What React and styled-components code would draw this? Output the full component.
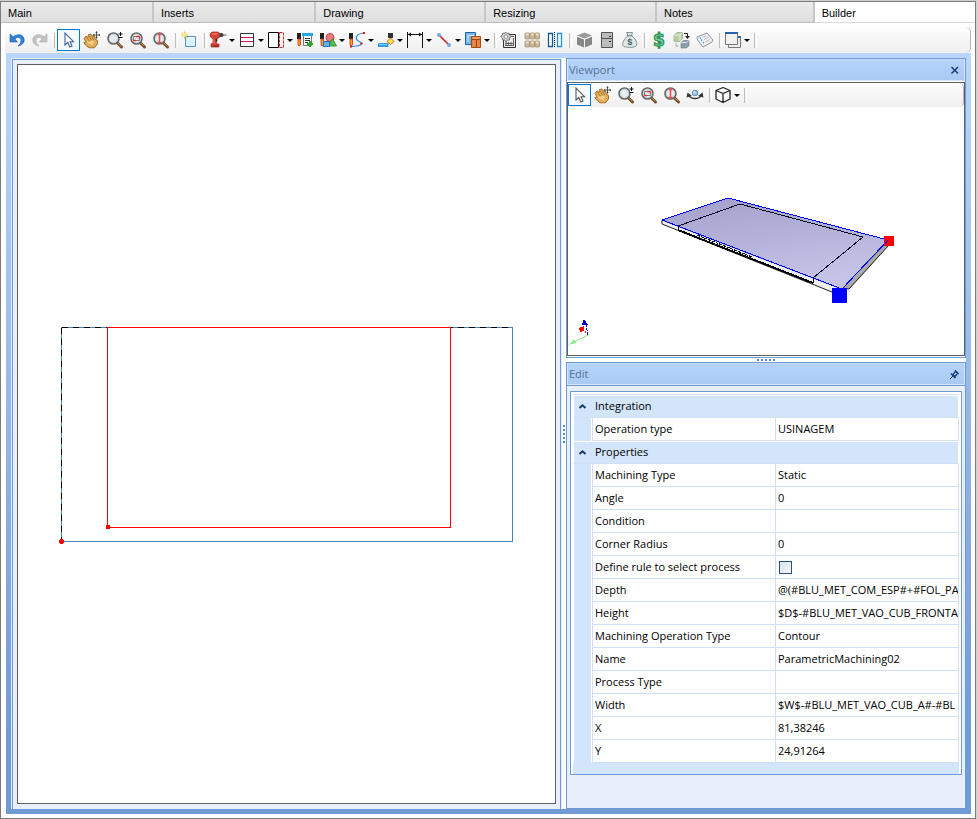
import React, { useState } from 'react'
import styled, { createGlobalStyle, css } from 'styled-components'

const GlobalStyle = createGlobalStyle`
*{
  box-sizing: border-box;
}
body{
  margin: 0;
  background: #fff;
  color: #000;
  font-family: 'Open Sans', 'Noto Sans', sans-serif;
  font-size: 11px;
}
button, input{
  font: inherit;
  color: inherit;
}
`

const Window = styled.div`
height: 100vh;
padding-top: 1px;
padding-right: 1px;
background: #d0d0d0;
display: flex;
`

const Frame = styled.main`
flex: 1;
min-width: 0;
display: flex;
flex-direction: column;
background: #fff;
border: 1px solid #7c7c7c;
`

const Tabs = styled.div`
display: flex;
height: 21px;
background: #e1e1e1;
`

const Tab = styled.button`
flex: ${props => props.$grow} 1 0;
height: 21px;
padding: 2px 0 0 7px;
border: 0;
border-right: 2px solid #c6c6c6;
border-bottom: 1px solid #bdbdbd;
background: linear-gradient(#ebebeb, #dedede);
font-family: 'Liberation Sans', Arial, sans-serif;
font-size: 11px;
text-align: left;

&:last-child{
  border-right: 0;
}

${props => props.$active && css`
  background: #fff;
  border-bottom-color: #d9d9d9;
`}
`

const Content = styled.div`
flex: 1;
min-height: 0;
display: flex;
flex-direction: column;
padding: 4px 4px 4px;
`

const Toolbar = styled.div`
display: flex;
align-items: center;
flex: none;
height: ${props => props.$small ? '24px' : '26px'};
border-right: 1px solid #b4b4b4;
border-radius: 0 5px 5px 0;
background: linear-gradient(#fdfdfd, #efefef);
overflow: hidden;
`

const ToolButton = styled.button`
display: flex;
align-items: center;
flex: none;
width: ${props => props.$menu ? '29px' : '23px'};
height: 22px;
padding: 0 1px;
border: 1px solid transparent;
background: none;

svg{
  flex: none;
}

${props => props.$active && css`
  border-color: #0078d7;
  background: #f6faff;
`}
`

const Caret = styled.span`
border: 3px solid transparent;
border-top-color: #000;
border-bottom: 0;
`

const Separator = styled.span`
flex: none;
width: 6px;
height: 15px;
border-right: 1px solid #fff;
background: linear-gradient(#bdbdbd, #bdbdbd) 3px 0 / 1px 100% no-repeat;
`

const Dock = styled.div`
flex: 1;
min-height: 0;
display: grid;
grid-template-columns: minmax(0, 551fr) 4px minmax(0, 400fr);
margin-left: 1px;
padding: 5px;
background: linear-gradient(#bad6fd, #6f9ad3 92%);
`

const CanvasPane = styled.section`
display: flex;
border: 1px solid #e3eefc;
border-bottom: 0;
background: #6f9ad3;
padding: 1px 1px 0;
`

const CanvasMat = styled.div`
flex: 1;
display: flex;
padding: 4px 4px 5px;
background: #e8effa;
`

const Canvas = styled.div`
flex: 1;
min-width: 0;
border: 1px solid #5f5f5f;
background: #fff;

svg{
  display: block;
  width: 100%;
  height: 100%;
}
`

const Splitter = styled.div`
display: flex;
align-items: center;
justify-content: center;
background: #fff;
`

const Grip = styled.span`
width: ${props => props.$vertical ? '2px' : '18px'};
height: ${props => props.$vertical ? '18px' : '2px'};
background: repeating-linear-gradient(${props => props.$vertical ? '180deg' : '90deg'}, #5b8ad0 0 2px, #fff 2px 4px);
`

const SidePane = styled.div`
min-height: 0;
display: grid;
grid-template-rows: minmax(0, 300fr) 4px minmax(0, 447fr);
`

const Panel = styled.section`
min-height: 0;
display: flex;
flex-direction: column;
border: 1px solid #6f9ad3;
background: ${props => props.$tinted ? '#e8effa' : '#fff'};
`

const PanelHeader = styled.header`
display: flex;
align-items: center;
justify-content: space-between;
flex: none;
height: 22px;
padding: 0 4px 0 1px;
border: 1px solid #d5e6fd;
border-top-color: #c3dbfc;
background: linear-gradient(#b6d3fa, #a9caf2);
`

const PanelTitle = styled.h2`
margin: 0;
font-size: 11px;
font-weight: 400;
line-height: 16px;
color: #557096;
`

const PanelButton = styled.button`
display: flex;
padding: 0;
border: 0;
background: none;
`

const Viewport = styled.div`
flex: 1;
min-height: 0;
display: flex;
flex-direction: column;
border: 1px solid #5f5f5f;
margin: 1px 0;
background: #fff;
`

const Scene = styled.svg`
flex: 1;
min-height: 0;
width: 100%;
display: block;
`

const GridArea = styled.div`
padding: 5px 3px 0;
border-top: 1px solid #6f9ad3;
overflow: auto;
`

const GridFrame = styled.div`
padding: 2px 2px 0;
border: 1px solid #6f9ad3;
background: #fff;
`

const GridFooter = styled.div`
height: 11px;
background: #d3e5fb;
`

const PropertyTable = styled.table`
width: 100%;
table-layout: fixed;
border-spacing: 0;
border-top: 1px solid #cfe0f7;
`

const Gutter = styled.td`
padding: 0;
border-left: 1px solid #fff;
border-right: 1px solid #fff;
background: #d3e5fb;
`

const GroupCell = styled.th`
height: 23px;
padding: 0;
border: 1px solid #fff;
border-bottom: 1px solid #cfe0f7;
background: #d3e5fb;
font-weight: 400;
text-align: left;
vertical-align: top;
`

const GroupButton = styled.button`
display: flex;
align-items: center;
gap: 8px;
height: 20px;
padding: 0 0 0 4px;
border: 0;
background: none;
line-height: 16px;
`

const NameCell = styled.th`
height: 23px;
padding: 0 0 0 2px;
border-left: 1px solid #cfe0f7;
border-bottom: 1px solid #cfe0f7;
font-weight: 400;
line-height: 16px;
text-align: left;
white-space: nowrap;
overflow: hidden;
`

const ValueCell = styled.td`
padding: 0 0 0 2px;
border: 1px solid #cfe0f7;
border-top: 0;
line-height: 16px;
`

const ValueText = styled.div`
white-space: nowrap;
overflow: hidden;
`

const CheckBox = styled.input`
appearance: none;
display: block;
width: 13px;
height: 13px;
margin: 0 0 0 1px;
border: 1px solid #1f5087;
background: linear-gradient(135deg, #dbe0ea, #f6f7fa);

&:checked{
  background: #3b76c4;
}
`

const Icon = ({ children }) => (
  <svg width="20" height="20" viewBox="0 0 20 20" fill="none" aria-hidden="true">{children}</svg>
)

const UndoIcon = () => (
  <Icon><path d="M3 4V12H10.500L8 9C10 6.500 14 7 14 10.500C14 13 12.500 14.500 11 16C15 15.200 17.200 13 17.200 10C17.200 4.500 10.500 3 6 6.800Z" fill="#2f83d6" stroke="#1b5ea8" strokeWidth=".6" /></Icon>
)

const RedoIcon = () => (
  <Icon><path d="M17 4V12H9.500L12 9C10 6.500 6 7 6 10.500C6 13 7.500 14.500 9 16C5 15.200 2.800 13 2.800 10C2.800 4.500 9.500 3 14 6.800Z" fill="#c3c3c3" stroke="#ababab" strokeWidth=".6" /></Icon>
)

const PointerIcon = ({ color = '#3b5f93' }) => (
  <Icon><path d="M6 3V15L8.800 12.500L10.800 17L13 16L11 11.700H14.500Z" fill="#fff" stroke={color} strokeWidth="1.100" /></Icon>
)

const HandIcon = () => (
  <Icon>
    <path d="M2 8.500L4 6L6 7.500L6.500 4.500L9 4L10 6L12.500 6L13 9L15.500 10.500V14L12.500 17.800H7L3.500 15L1.800 12.500L4.200 12.200Z" fill="#e2ac58" stroke="#9a6720" strokeWidth=".9" />
    <path d="M4.500 7.500L7.500 11M7.300 6L9.500 10M10 6.800L11.500 10" stroke="#9a6720" strokeWidth=".8" />
    <path d="M5 12L8 13L11 15M8.500 11.500L12 12.500" stroke="#f8d898" strokeWidth="1.500" />
    <path d="M14.500 1.800V8.200M11.300 5H17.700" stroke="#444" strokeWidth=".9" />
    <path d="M13.300 2.700L14.500 1.200L15.700 2.700ZM13.300 7.300L14.500 8.800L15.700 7.300ZM12.200 3.800L10.800 5L12.200 6.200ZM16.800 3.800L18.200 5L16.800 6.200Z" fill="#333" />
  </Icon>
)

const Lens = ({ children }) => (
  <Icon>
    <path d="M12 12.500L16.500 17" stroke="#76502c" strokeWidth="3" strokeLinecap="round" />
    <path d="M12.500 12.500L16 16" stroke="#c08d4d" strokeLinecap="round" />
    <circle cx="8.500" cy="8.500" r="5.500" fill="#e6edf1" stroke="#666" strokeWidth="1.600" />
    <circle cx="8.500" cy="8.500" r="4.200" stroke="#bccad1" strokeWidth=".8" />
    {children}
  </Icon>
)

const ZoomIcon = () => (
  <Lens><path d="M13 1H19V8.500H14.500Z" fill="#fafafa" /><path d="M15.500 2V6M13.500 4H17.500M13.500 7.500H17.500" stroke="#111" /></Lens>
)

const ZoomWindowIcon = () => (
  <Lens><path d="M5.500 6.500H11.500V10.500H5.500Z" stroke="#777" /><path d="M8 6.500H11.500M5 10.500H8M11.500 7V9" stroke="#e33" strokeWidth="1.300" /></Lens>
)

const ZoomFitIcon = () => (
  <Lens><path d="M6.500 4.500H10.500M6.500 12.500H10.500M8.500 5V12" stroke="#f14848" strokeWidth="1.500" /></Lens>
)

const NewSheetIcon = () => (
  <Icon>
    <path d="M5.500 6.500H15.500V16.500H5.500Z" fill="#d9effc" stroke="#4f93c6" />
    <path d="M8 8H14V15" stroke="#fff" />
    <path d="M4.500 1.500V8.500M1 5H8M2 2.500L7 7.500M7 2.500L2 7.500" stroke="#ecc83a" />
    <circle cx="4.500" cy="5" r="1.600" fill="#fff59a" />
  </Icon>
)

const DrillIcon = () => (
  <Icon>
    <path d="M1 4L3 2H9L10.500 3V7L9 8.500H7L7.500 14H10V17H2V14L4 13V9L1.500 7Z" fill="#d94336" stroke="#962820" strokeWidth=".7" />
    <path d="M3 4H8M5 9.500V13" stroke="#ff8b78" />
    <path d="M10.500 3H13L14.500 4.300V6L13 7H10.500Z" fill="#444" />
    <path d="M14 5H17.500" stroke="#555" />
    <path d="M7.500 9V11.500" stroke="#222" strokeWidth="1.500" />
    <path d="M4 16H9" stroke="#7f1d18" />
  </Icon>
)

const PanelIcon = () => (
  <Icon><path d="M2.500 3.500H15.500V16.500H2.500Z" fill="#fff" stroke="#333" /><path d="M3 7.500H15M3 11.500H15" stroke="#d4145a" /></Icon>
)

const EdgeIcon = () => (
  <Icon><path d="M1.500 2.500H11.500V17.500H1.500Z" fill="#fff" stroke="#000" /><path d="M12.500 2.500H16.500V17.500H12.500Z" stroke="#d82626" strokeDasharray="3 1" /></Icon>
)

const Bit = () => (
  <>
    <path d="M1 3H5V9H1Z" fill="#222" />
    <path d="M2 9H4.500V15L3 16L2 15Z" fill="#f7a21b" stroke="#d72a16" strokeWidth=".8" />
  </>
)

const ListAddIcon = () => (
  <Icon>
    <Bit />
    <path d="M7.500 6V15.500H15.500V6" fill="#fff" stroke="#777" />
    <path d="M6 4.500H17" stroke="#21a8ea" strokeWidth="3" />
    <path d="M9 8.500H14M9 10.500H14M9 12.500H12" stroke="#333" />
    <path d="M14 11V17M11 14H17" stroke="#24a824" strokeWidth="2" />
  </Icon>
)

const ShapesIcon = () => (
  <Icon>
    <Bit />
    <circle cx="11" cy="7.500" r="4" fill="#ee7a7f" stroke="#bd464c" />
    <path d="M13.500 8.500L17.500 16H9.500Z" fill="#51bd55" stroke="#238a2a" strokeWidth=".8" />
    <path d="M4.500 11.500H10.500V16.500H4.500Z" fill="#67aff2" stroke="#2870bd" />
  </Icon>
)

const PathIcon = () => (
  <Icon>
    <Bit />
    <path d="M3 16.500C16 16 14 13 11 11.500C6 9 8 3.500 16 3" stroke="#2f86e0" strokeWidth="1.200" />
    <path d="M2 15.500H4V17.500H2ZM15 2H17V4H15ZM12.500 12.500H14.500V14.500H12.500Z" fill="#e01818" />
  </Icon>
)

const GrooveIcon = () => (
  <Icon>
    <path d="M1 13H11.500V17H1Z" fill="#2f9bea" />
    <path d="M2 14.500H10" stroke="#8fd0fb" />
    <path d="M11 3H16V8H11Z" fill="#333" />
    <path d="M13.500 8L17 11.500L13.500 14.500L10 11.500Z" fill="#ffe93b" stroke="#d83b1b" strokeWidth=".8" />
  </Icon>
)

const DimensionIcon = () => (
  <Icon>
    <path d="M1.500 2V18M16.500 2V18M2 4.500H16" stroke="#111" />
    <path d="M2 4.500L5 2.500V6.500ZM16 4.500L13 2.500V6.500Z" fill="#111" />
  </Icon>
)

const LineIcon = () => (
  <Icon>
    <path d="M4 5L14 15" stroke="#d91a1a" strokeWidth="1.600" />
    <circle cx="4" cy="5" r="2" fill="#78a9ee" /><circle cx="14" cy="15" r="2" fill="#78a9ee" />
  </Icon>
)

const CopyIcon = () => (
  <Icon>
    <path d="M1.500 2.500H11.500V14.500H1.500Z" fill="#74b9f3" stroke="#1e62ad" />
    <path d="M4 5.500H10M4 5V12" stroke="#d4ebff" />
    <path d="M7.500 6.500H16.500V17.500H7.500Z" fill="#eb8544" stroke="#a84a18" />
    <path d="M8 9.500H16M12.500 10V17" stroke="#9b4516" /><path d="M9 8H15" stroke="#f9bc8c" />
  </Icon>
)

const CalcIcon = () => (
  <Icon>
    <path d="M6 4.500H16.500V17.500H4.500V10" fill="#e9e9e9" stroke="#333" />
    <path d="M11 6.500H15M7 12V16M9.500 12V16M12 12V16M14.500 8V16M6 13.500H15M6 15.500H15" stroke="#555" strokeWidth=".9" />
    <path d="M6.500 2L8 3.500L10 3L10.500 5L12 6.500L10.500 8L10.500 10L8.500 10L7 12L5.500 10L3.500 10L3.300 8L1.500 6.500L3.300 5L3.800 3L5.500 3.500Z" fill="#ccc" stroke="#666" strokeWidth=".8" />
    <circle cx="7" cy="6.700" r="1.700" fill="#fff" stroke="#777" strokeWidth=".7" />
  </Icon>
)

const StockIcon = () => (
  <Icon>
    {[3, 11].map(y => [3, 8, 13].map(x => (
      <g key={`${x}-${y}`}>
        <rect x={x} y={y} width="4.500" height="6" rx=".8" fill="#c9b99a" stroke="#9b8764" strokeWidth=".7" />
        <path d={`M${x + 0.8} ${y + 1.5}H${x + 3.600}`} stroke="#f4ecdc" strokeWidth="1.500" />
      </g>
    )))}
  </Icon>
)

const MirrorIcon = () => (
  <Icon>
    <path d="M3.500 3.500H7.500V16.500H3.500Z" fill="#fff" stroke="#14588c" strokeWidth="1.300" />
    <path d="M9.500 2V18" stroke="#111" strokeDasharray="1 1" />
    <path d="M12.500 3.500H16.500V16.500H12.500Z" fill="#fff" stroke="#1a91e2" strokeWidth="1.300" />
  </Icon>
)

const BlockIcon = () => (
  <Icon>
    <path d="M10.500 2.500L18 5.500L10.500 8.500L3 5.500Z" fill="#9a9a9a" />
    <path d="M3 6.700L10 9.500V17.500L3 14.500ZM18 6.700L11 9.500V17.500L18 14.500Z" fill="#878787" />
  </Icon>
)

const CabinetIcon = () => (
  <Icon>
    <path d="M4.500 2.500H15.500V17.500H4.500Z" fill="#bcbcbc" stroke="#555" />
    <path d="M5 8.500H15" stroke="#555" /><path d="M12 6.500H14M12 11.500H14" stroke="#333" />
  </Icon>
)

const BagIcon = () => (
  <Icon>
    <path d="M6.500 2.500L12.500 2.500L11.500 5.500C16.500 10 17.500 13 16.500 15.500C15.500 18 4 18 3 15.500C2 13 3.500 10 8 5.500Z" fill="#dfe7e7" stroke="#819292" />
    <path d="M7 5.800H12.500" stroke="#66797b" />
    <text x="9.700" y="14.500" textAnchor="middle" fontFamily="Liberation Sans, sans-serif" fontSize="9" fontWeight="700" fill="#3f5f66">$</text>
  </Icon>
)

const PriceIcon = () => (
  <Icon>
    <text x="10" y="16" textAnchor="middle" fontFamily="DejaVu Sans, sans-serif" fontSize="17" fontWeight="700" fill="#7fd8a2" stroke="#2b9159" strokeWidth="1.200">$</text>
  </Icon>
)

const ExchangeIcon = () => (
  <Icon>
    <path d="M2 5L5 2.500L10.500 2.500V8.500L8 11.500H2Z" fill="#b9cda2" stroke="#8fa080" strokeWidth=".6" />
    <path d="M2 5H8L10.500 2.500M8 5V11" stroke="#e8f0df" />
    <path d="M9 12.500L11.500 10.500H17V15.500L14.500 18H9Z" fill="#8e9fab" stroke="#667781" strokeWidth=".6" />
    <path d="M9 12.500H14.500L17 10.500" stroke="#d9e1e6" />
    <path d="M12 3.500H15.500V7" stroke="#222" />
    <path d="M13 6L15.500 9L18 6Z" fill="#222" />
    <path d="M4 13V16H7" stroke="#aaa" />
  </Icon>
)

const LabelIcon = () => (
  <Icon>
    <path d="M2 7L12 3L18 10L17 12L8 17L2.500 10Z" fill="#eef0f2" stroke="#8c969e" />
    <path d="M8 7L11 6M9 9.500L13 7.500M10.500 12L15 9.500" stroke="#b6bdc4" />
    <path d="M5 8.500L6 8M6 10.500L7 10M8 13L9 12.500" stroke="#4296d2" strokeWidth="1.500" />
  </Icon>
)

const WindowsIcon = () => (
  <Icon>
    <path d="M4.500 6.500H16.500V17.500H4.500Z" fill="#eee" stroke="#777" />
    <path d="M1.500 3H13.500V14.500H1.500Z" fill="#f3f3ee" stroke="#777" />
    <path d="M1 3H14" stroke="#2864ae" strokeWidth="2" /><path d="M14 7H17" stroke="#2864ae" strokeWidth="2" />
  </Icon>
)

const OrbitIcon = () => (
  <Icon>
    <path d="M4 10.500C6 14.500 14 14.500 16 10.500" stroke="#333" strokeWidth="1.500" />
    <path d="M1.500 12.500L2.500 7.500L7 11ZM18.500 12.500L17.500 7.500L13 11Z" fill="#333" />
    <circle cx="10" cy="8" r="2.800" fill="#9cc4f0" stroke="#4976b0" strokeWidth=".8" />
    <circle cx="9.300" cy="7.200" r="1" fill="#e0efff" />
  </Icon>
)

const CubeIcon = () => (
  <Icon><path d="M9 2.500L16 5.500V14L9 17.500L2 14V5.500ZM2 5.500L9 8.500L16 5.500M9 8.500V17.500" fill="#fff" stroke="#222" strokeWidth="1.300" strokeLinejoin="round" /></Icon>
)

const CloseIcon = () => (
  <svg width="10" height="10" viewBox="0 0 10 10" aria-hidden="true"><path d="M1.500 2L8 8.500M8 2L1.500 8.500" stroke="#163f80" strokeWidth="1.500" /></svg>
)

const PinIcon = () => (
  <svg width="11" height="11" viewBox="0 0 11 11" fill="none" aria-hidden="true">
    <path d="M1 10L4 7" stroke="#163f80" />
    <path d="M2 4.500L6.500 9M6 1.500L9.500 5" stroke="#163f80" strokeWidth="1.700" />
    <path d="M4 5.500L6.500 2.500L8.500 4.500L6 7.500Z" fill="#b8d4fa" stroke="#163f80" strokeWidth="1.200" />
  </svg>
)

const ChevronIcon = () => (
  <svg width="9" height="7" viewBox="0 0 9 7" fill="none" aria-hidden="true"><path d="M1.500 5L4.500 2.200L7.500 5" stroke="#163868" strokeWidth="1.900" /></svg>
)

const tabs = [
  { label: 'Main', grow: 152 },
  { label: 'Inserts', grow: 162 },
  { label: 'Drawing', grow: 170 },
  { label: 'Resizing', grow: 171 },
  { label: 'Notes', grow: 157 },
  { label: 'Builder', grow: 162 },
]

const SEP = 'separator'

const mainTools = [
  { name: 'Undo', icon: <UndoIcon /> },
  { name: 'Redo', icon: <RedoIcon /> },
  SEP,
  { name: 'Select', icon: <PointerIcon />, active: true },
  { name: 'Pan', icon: <HandIcon /> },
  { name: 'Zoom', icon: <ZoomIcon /> },
  { name: 'Zoom window', icon: <ZoomWindowIcon /> },
  { name: 'Zoom fit', icon: <ZoomFitIcon /> },
  SEP,
  { name: 'New', icon: <NewSheetIcon /> },
  SEP,
  { name: 'Drilling', icon: <DrillIcon />, menu: true },
  { name: 'Panel', icon: <PanelIcon />, menu: true },
  { name: 'Edge', icon: <EdgeIcon />, menu: true },
  { name: 'Add machining', icon: <ListAddIcon /> },
  { name: 'Shapes', icon: <ShapesIcon />, menu: true },
  { name: 'Path', icon: <PathIcon />, menu: true },
  { name: 'Groove', icon: <GrooveIcon />, menu: true },
  { name: 'Dimension', icon: <DimensionIcon />, menu: true },
  { name: 'Line', icon: <LineIcon />, menu: true },
  { name: 'Copy', icon: <CopyIcon />, menu: true },
  SEP,
  { name: 'Calculate', icon: <CalcIcon /> },
  { name: 'Stock', icon: <StockIcon /> },
  { name: 'Mirror', icon: <MirrorIcon /> },
  SEP,
  { name: 'Block', icon: <BlockIcon /> },
  { name: 'Cabinet', icon: <CabinetIcon /> },
  { name: 'Cost', icon: <BagIcon /> },
  SEP,
  { name: 'Price', icon: <PriceIcon /> },
  { name: 'Exchange', icon: <ExchangeIcon /> },
  { name: 'Label', icon: <LabelIcon /> },
  SEP,
  { name: 'Windows', icon: <WindowsIcon />, menu: true },
  SEP,
]

const viewTools = [
  { name: 'Select', icon: <PointerIcon color="#555" />, active: true },
  { name: 'Pan', icon: <HandIcon /> },
  { name: 'Zoom', icon: <ZoomIcon /> },
  { name: 'Zoom window', icon: <ZoomWindowIcon /> },
  { name: 'Zoom fit', icon: <ZoomFitIcon /> },
  { name: 'Orbit', icon: <OrbitIcon /> },
  SEP,
  { name: 'View', icon: <CubeIcon />, menu: true },
  SEP,
]

const groups = [
  { title: 'Integration', rows: [['Operation type', 'USINAGEM']] },
  {
    title: 'Properties',
    rows: [
      ['Machining Type', 'Static'],
      ['Angle', '0'],
      ['Condition', ''],
      ['Corner Radius', '0'],
      ['Define rule to select process', false],
      ['Depth', '@(#BLU_MET_COM_ESP#+#FOL_PA'],
      ['Height', '$D$-#BLU_MET_VAO_CUB_FRONTA'],
      ['Machining Operation Type', 'Contour'],
      ['Name', 'ParametricMachining02'],
      ['Process Type', ''],
      ['Width', '$W$-#BLU_MET_VAO_CUB_A#-#BL'],
      ['X', '81,38246'],
      ['Y', '24,91264'],
    ],
  },
]

const Tools = ({ items, label, small }) => (
  <Toolbar role="toolbar" aria-label={label} $small={small}>
    {items.map((item, i) => item === SEP ? <Separator key={i} /> : (
      <ToolButton key={i} type="button" title={item.name} aria-label={item.name} $menu={item.menu} $active={item.active}>
        {item.icon}
        {item.menu && <Caret />}
      </ToolButton>
    ))}
  </Toolbar>
)

const PlanDrawing = () => (
  <svg viewBox="0 0 537 738" fill="none" shapeRendering="crispEdges">
    <path d="M43.500 262.500H494.500V476.500H43.500Z" stroke="#4682b4" />
    <path d="M43.500 262.500V476.500M43.500 262.500H494.500" stroke="#000" strokeDasharray="6 5" />
    <path d="M89.500 262.500H432.500V462.500H89.500Z" stroke="#f00" />
    <path d="M88 460H92V464H88Z" fill="#f00" />
    <path d="M42 474H45V475H46V478H45V479H42V478H41V475H42Z" fill="#f00" />
  </svg>
)

const ModelScene = () => (
  <Scene viewBox="0 -1 396 248" fill="none">
    <defs>
      <linearGradient id="board" x1="0" y1="0" x2=".3" y2="1">
        <stop offset="0" stopColor="#a29fca" />
        <stop offset="1" stopColor="#c6c3e8" />
      </linearGradient>
    </defs>
    <path d="M94 112L94 116L264 184L274 181Z" fill="#eee" stroke="#222" />
    <path d="M320 133L321 137L281 181L274 180Z" fill="#aaa" stroke="#111" />
    <path d="M94 112L160 90L320 132L274 181Z" fill="url(#board)" />
    <g shapeRendering="crispEdges">
      <path d="M94 112L160 90L320 132L274 181Z" stroke="#00f" />
      <path d="M110 118L172 96L295 129L245 170V175M110 118V122" stroke="#080820" />
      <path d="M110 122L245 175" stroke="#000" strokeWidth="2" />
      <path d="M129 127L184 149M131 130L184 151" stroke="#111" strokeDasharray="3 1" />
      <path d="M264 180H279V195H264Z" fill="#00f" />
      <path d="M316 128H326V138H316Z" fill="#f00" />
      <path d="M320 132L317 136" stroke="#00f" />
      <path d="M20 227L6 234" stroke="#8ceb8c" />
      <path d="M0 237L6 231L8 235Z" fill="#8ceb8c" />
      <path d="M20 227L16 222" stroke="#f00" strokeDasharray="2 1" />
      <path d="M11 220L16 218V223L12 224Z" fill="#f00" />
      <path d="M20 227L18 217" stroke="#0000c0" strokeDasharray="3 1" />
      <path d="M16 211L20 217H14Z" fill="#00c" />
    </g>
  </Scene>
)

const PropertyGroup = ({ title, rows }) => {
  const [open, setOpen] = useState(true)

  return (
    <tbody>
      <tr>
        <GroupCell colSpan={3} scope="rowgroup">
          <GroupButton type="button" aria-expanded={open} onClick={() => setOpen(!open)}>
            <ChevronIcon />
            {title}
          </GroupButton>
        </GroupCell>
      </tr>
      {open && rows.map(([name, value]) => (
        <tr key={name}>
          <Gutter />
          <NameCell scope="row">
            {typeof value === 'boolean' ? <label htmlFor="define-rule">{name}</label> : name}
          </NameCell>
          <ValueCell>
            {typeof value === 'boolean'
              ? <CheckBox id="define-rule" type="checkbox" defaultChecked={value} />
              : <ValueText>{value}</ValueText>}
          </ValueCell>
        </tr>
      ))}
    </tbody>
  )
}

const App = () => {
  const [tab, setTab] = useState('Builder')

  return (
    <>
      <GlobalStyle />
      <Window>
        <Frame>
          <Tabs role="tablist">
            {tabs.map(({ label, grow }) => (
              <Tab key={label} type="button" role="tab" aria-selected={tab === label} $active={tab === label} $grow={grow} onClick={() => setTab(label)}>
                {label}
              </Tab>
            ))}
          </Tabs>
          <Content>
            <Tools items={mainTools} label="Builder tools" />
            <Dock>
              <CanvasPane>
                <CanvasMat>
                  <Canvas><PlanDrawing /></Canvas>
                </CanvasMat>
              </CanvasPane>
              <Splitter><Grip $vertical /></Splitter>
              <SidePane>
                <Panel>
                  <PanelHeader>
                    <PanelTitle>Viewport</PanelTitle>
                    <PanelButton type="button" aria-label="Close"><CloseIcon /></PanelButton>
                  </PanelHeader>
                  <Viewport>
                    <Tools items={viewTools} label="Viewport tools" small />
                    <ModelScene />
                  </Viewport>
                </Panel>
                <Splitter><Grip /></Splitter>
                <Panel $tinted>
                  <PanelHeader>
                    <PanelTitle>Edit</PanelTitle>
                    <PanelButton type="button" aria-label="Pin"><PinIcon /></PanelButton>
                  </PanelHeader>
                  <GridArea>
                    <GridFrame>
                      <PropertyTable>
                        <colgroup>
                          <col width="19" />
                          <col width="183" />
                          <col />
                        </colgroup>
                        {groups.map(group => <PropertyGroup key={group.title} {...group} />)}
                      </PropertyTable>
                      <GridFooter />
                    </GridFrame>
                  </GridArea>
                </Panel>
              </SidePane>
            </Dock>
          </Content>
        </Frame>
      </Window>
    </>
  )
}

export default App
